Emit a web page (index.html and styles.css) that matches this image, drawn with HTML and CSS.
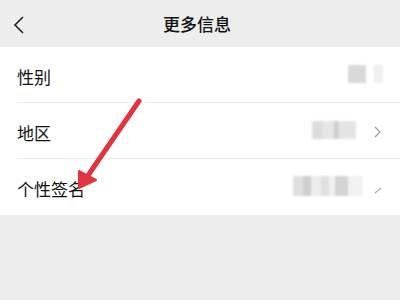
FILE: index.html
```html
<!DOCTYPE html>
<html lang="zh-CN">
<head>
  <meta charset="UTF-8" />
  <title>更多信息</title>
  <link rel="stylesheet" href="styles.css">
</head>
<body>
  <header class="topbar">
    <svg class="back" width="12" height="18" viewBox="0 0 12 18">
      <path d="M10 1 L2 9 L10 17" fill="none" stroke="#222" stroke-width="1.6"/>
    </svg>
    <h1>更多信息</h1>
  </header>

  <ul class="list">
    <li class="row">
      <span class="label">性别</span>
      <span class="value plain">
        <i class="blur b1"></i><i class="blur faint"></i>
      </span>
    </li>
    <li class="row">
      <span class="label">地区</span>
      <span class="value">
        <i class="blur b2"></i>
        <svg class="chev" width="8" height="12" viewBox="0 0 8 12"><path d="M1 1 L6 6 L1 11" fill="none" stroke="#999" stroke-width="1.2"/></svg>
      </span>
    </li>
    <li class="row">
      <span class="label">个性签名</span>
      <span class="value tight">
        <i class="blur b3"></i>
        <svg class="chev" width="8" height="12" viewBox="0 0 8 12"><path d="M1 10 L7 5" fill="none" stroke="#aaa" stroke-width="1.2"/></svg>
      </span>
    </li>
  </ul>

  <svg class="pointer" width="400" height="300" viewBox="0 0 400 300">
    <line x1="139" y1="101" x2="89" y2="174" stroke="#e23440" stroke-width="5" stroke-linecap="round"/>
    <polygon points="79,188 79,171 96,180" fill="#e23440" stroke="#e23440" stroke-width="2" stroke-linejoin="round"/>
  </svg>
</body>
</html>
```

FILE: styles.css
```css
body {
  margin: 0;
  width: 400px;
  height: 300px;
  background: #ededed;
  font-family: "Noto Sans CJK SC", "Noto Sans", sans-serif;
  color: #111;
  position: relative;
  overflow: hidden;
}
.topbar {
  height: 47px;
  display: flex;
  align-items: center;
  justify-content: center;
  position: relative;
}
.topbar h1 {
  margin: 0 6px 0 0;
  font-size: 17px;
  font-weight: 500;
}
.back {
  position: absolute;
  left: 13px;
  top: 16px;
}
.list {
  list-style: none;
  margin: 0;
  padding: 0 0 0 17px;
  background: #fff;
}
.row {
  height: 56px;
  display: flex;
  align-items: center;
  justify-content: space-between;
  border-bottom: 1px solid #ececec;
  padding-top: 3px;
  box-sizing: border-box;
}
.row:last-child {
  border-bottom: none;
}
.label {
  font-size: 17px;
}
.value {
  display: flex;
  align-items: center;
  gap: 18px;
  padding-right: 18px;
}
.value.plain {
  gap: 8px;
  padding-right: 17px;
}
.value.tight {
  gap: 11px;
}
.blur {
  display: block;
  filter: blur(1px);
}
.b1 {
  width: 18px;
  height: 18px;
  background: #d9d9d9;
  margin-top: -4px;
}
.faint {
  width: 9px;
  height: 18px;
  background: #efefef;
  margin-top: -4px;
}
.b2 {
  width: 44px;
  height: 18px;
  margin-top: -4px;
  background: linear-gradient(90deg, #dcdcdc 0 25%, #e6e6e6 25% 50%, #cfcfcf 50% 62%, #e4e4e4 62% 100%);
}
.b3 {
  width: 70px;
  height: 20px;
  margin-top: -6px;
  background: linear-gradient(90deg, #e0e0e0 0 14%, #cfcfcf 14% 26%, #ececec 26% 40%, #e0e0e0 40% 52%, #f0f0f0 52% 60%, #d4d4d4 60% 78%, #f2f2f2 78% 100%);
}
.chev {
  display: block;
}
.pointer {
  position: absolute;
  left: 0;
  top: 0;
}
```
